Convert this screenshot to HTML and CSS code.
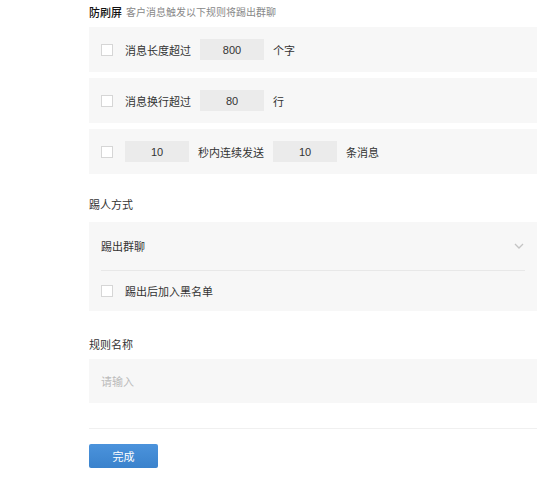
FILE: index.html
```html
<!DOCTYPE html>
<html lang="zh-CN">
<head>
<meta charset="utf-8">
<link rel="stylesheet" href="styles.css">
</head>
<body>
<div class="page">
  <div class="head"><span class="head-title">防刷屏</span><span class="head-desc">客户消息触发以下规则将踢出群聊</span></div>
  <div class="rules">
    <div class="panel row">
      <span class="cb"></span>
      <span class="txt">消息长度超过</span>
      <span class="num">800</span>
      <span class="txt">个字</span>
    </div>
    <div class="panel row">
      <span class="cb"></span>
      <span class="txt">消息换行超过</span>
      <span class="num">80</span>
      <span class="txt">行</span>
    </div>
    <div class="panel row">
      <span class="cb"></span>
      <span class="num">10</span>
      <span class="txt">秒内连续发送</span>
      <span class="num">10</span>
      <span class="txt">条消息</span>
    </div>
  </div>

  <div class="label label-kick">踢人方式</div>
  <div class="panel kick">
    <div class="select">
      <span class="txt">踢出群聊</span>
      <svg class="chev" width="10" height="6" viewBox="0 0 10 6"><path d="M1 1 L5 5 L9 1" fill="none" stroke="#c4c4c4" stroke-width="1.3"/></svg>
    </div>
    <div class="divider"></div>
    <div class="row blk">
      <span class="cb"></span>
      <span class="txt">踢出后加入黑名单</span>
    </div>
  </div>

  <div class="label label-name">规则名称</div>
  <div class="panel name"><span class="ph">请输入</span></div>

  <div class="sep"></div>
  <button class="done">完成</button>
</div>
</body>
</html>
```

FILE: styles.css
```css
* { box-sizing: border-box; }
html, body { margin: 0; padding: 0; background: #fff; }
body {
  font-family: "Liberation Sans", "Noto Sans CJK SC", sans-serif;
  font-size: 11px;
  color: #333;
}
.page {
  width: 537px;
  padding: 4px 0 0 89px;
}
.head {
  height: 18px;
  line-height: 18px;
  display: flex;
  align-items: center;
  gap: 4px;
}
.head-title { font-size: 11px; font-weight: 500; color: #111; }
.head-desc { font-size: 10px; color: #888; }
.rules {
  margin-top: 5px;
  display: flex;
  flex-direction: column;
  gap: 6px;
}
.panel { background: #f7f7f7; }
.row {
  height: 45px;
  display: flex;
  align-items: center;
  padding-left: 12px;
}
.cb {
  width: 12px;
  height: 12px;
  background: #fff;
  border: 1px solid #d6d6d6;
  margin-right: 12px;
  flex: none;
}
.txt { color: #333; }
.num {
  width: 64px;
  height: 21px;
  background: #ebebeb;
  display: flex;
  align-items: center;
  justify-content: center;
  color: #333;
  margin: 0 9px 0 0;
}
.txt + .num { margin-left: 9px; }
.label {
  height: 20px;
  line-height: 20px;
  color: #333;
}
.label-kick { margin-top: 21px; }
.kick { margin-top: 7px; height: 89px; }
.select {
  height: 48px;
  display: flex;
  align-items: center;
  justify-content: space-between;
  padding: 0 12px;
}
.chev { margin-right: 1px; }
.divider {
  height: 1px;
  background: #e8e8e8;
  margin: 0 12px;
}
.blk { height: 40px; }
.label-name { margin-top: 24px; }
.name {
  margin-top: 4px;
  height: 44px;
  display: flex;
  align-items: center;
  padding-left: 12px;
}
.ph { color: #bbb; }
.sep {
  margin-top: 25px;
  height: 1px;
  background: #f0f0f0;
}
.done {
  margin-top: 15px;
  width: 69px;
  height: 24px;
  border: none;
  border-radius: 2px;
  background: linear-gradient(#4b93dc, #3a82cc);
  color: #fff;
  font-family: "Liberation Sans", "Noto Sans CJK SC", sans-serif;
  font-size: 11px;
  padding: 0;
  display: block;
}
```
